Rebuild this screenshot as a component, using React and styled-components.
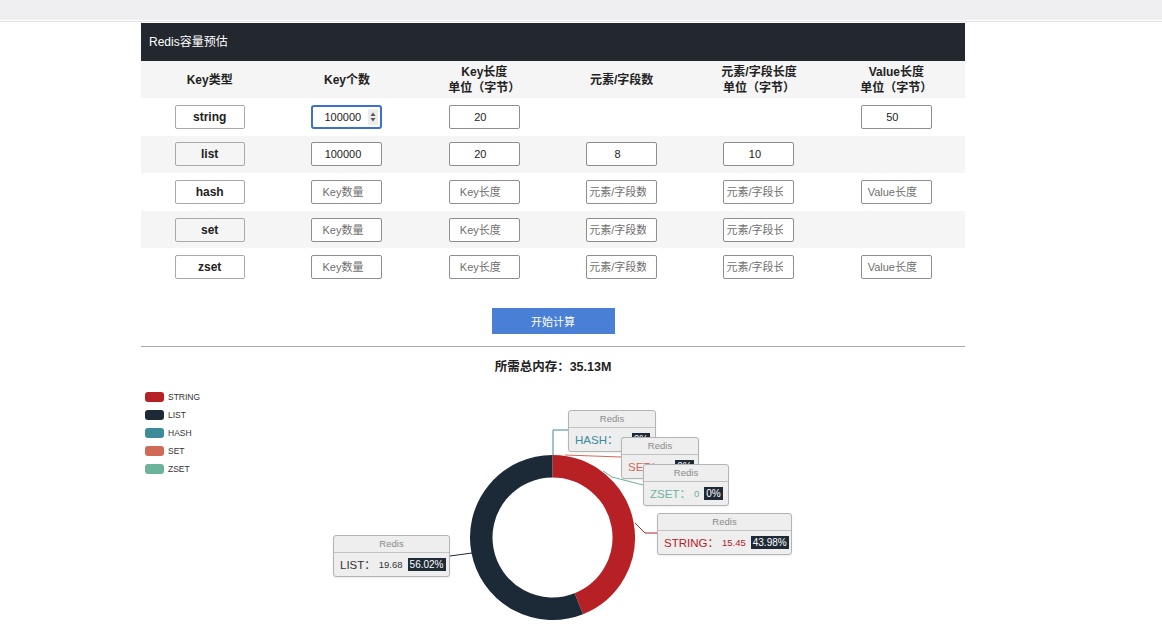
import React from 'react';
import styled, { createGlobalStyle } from 'styled-components';

const GlobalStyle = createGlobalStyle`
  html, body {
    margin: 0;
    padding: 0;
    background: #fff;
  }
  body {
    font-family: "Liberation Sans", "Noto Sans CJK SC", sans-serif;
    color: #222;
    overflow: hidden;
  }
`;

const TopBar = styled.div`
  height: 21px;
  background: linear-gradient(#efeff1 0 20px, #fff 20px);
  border-bottom: 1px solid #e2e2e2;
`;

const Main = styled.main`
  width: 824px;
  margin: 1px 0 0 141px;
`;

const CardHeader = styled.div`
  box-sizing: border-box;
  height: 38px;
  display: flex;
  align-items: center;
  padding: 0 0 3px 8px;
  background: #23282e;
  color: #fff;
  font-size: 12px;
`;

const Row = styled.div`
  display: grid;
  grid-template-columns: repeat(6, 1fr);
  align-items: center;
  height: ${p => p.$h || 37.6}px;
  background: ${p => (p.$striped ? '#f5f5f5' : '#fff')};
`;

const HeadCell = styled.div`
  text-align: center;
  font-size: 12px;
  font-weight: bold;
  line-height: 16px;
`;

const Cell = styled.div`
  display: flex;
  justify-content: center;
  align-items: center;
`;

const TypeBox = styled.div`
  box-sizing: border-box;
  width: 70px;
  height: 24px;
  display: flex;
  align-items: center;
  justify-content: center;
  border: 1px solid #a8a8a8;
  border-radius: 2px;
  font-size: 12px;
  font-weight: bold;
`;

const FieldWrap = styled.div`
  position: relative;
  width: 71px;
  height: 24px;
`;

const Field = styled.input`
  box-sizing: border-box;
  width: 100%;
  height: 100%;
  margin: 0;
  padding: 0 10px 0 2px;
  border: ${p => (p.$focused ? '2px solid #3d70cc' : '1px solid #8e8e8e')};
  border-radius: ${p => (p.$focused ? 3 : 2)}px;
  outline: none;
  background: #fff;
  color: #222;
  font-family: inherit;
  font-size: 11px;
  text-align: ${p => (p.$focused ? 'left' : 'center')};
  padding-left: ${p => (p.$focused ? 11 : 2)}px;

  &::placeholder {
    color: #6f6f6f;
  }
`;

const Spinner = styled.div`
  position: absolute;
  right: 4px;
  top: 4px;
  width: 10px;
  height: 16px;
  border-radius: 2px;
  background: #ececec;
  display: flex;
  align-items: center;
  justify-content: center;
`;

const ButtonRow = styled.div`
  display: flex;
  justify-content: center;
  margin-top: 22px;
`;

const CalcButton = styled.button`
  width: 123px;
  height: 26px;
  border: none;
  background: #4a7fd6;
  color: #fff;
  font-family: inherit;
  font-size: 11px;
`;

const Divider = styled.hr`
  margin: 12px 0 0;
  border: none;
  height: 1px;
  background: #a9a9a9;
`;

const Total = styled.div`
  box-sizing: border-box;
  height: 33px;
  padding-top: 12px;
  text-align: center;
  font-size: 12.5px;
  font-weight: bold;
  line-height: 16px;
`;

const ChartArea = styled.section`
  position: relative;
  height: 257px;
  overflow: hidden;
`;

const Legend = styled.ul`
  list-style: none;
  margin: 0;
  padding: 12px 0 0 4px;
  display: flex;
  flex-direction: column;
  gap: 8px;
`;

const LegendItem = styled.li`
  display: flex;
  align-items: center;
  gap: 4px;
  height: 10px;
  font-size: 8.5px;
  color: #333;
`;

const Swatch = styled.span`
  width: 19px;
  height: 10px;
  border-radius: 3px;
  background: ${p => p.$color};
`;

const Canvas = styled.div`
  position: absolute;
  inset: 0;
  pointer-events: none;
`;

const LabelBox = styled.div`
  position: absolute;
  left: ${p => p.$x}px;
  top: ${p => p.$y}px;
  width: ${p => p.$w}px;
  box-sizing: border-box;
  background: #eeeeee;
  border: 1px solid #b4b4b4;
  border-radius: 3px;
  box-shadow: 0 1px 2px rgba(0, 0, 0, 0.08);
  overflow: hidden;
`;

const BoxHead = styled.div`
  height: 16px;
  line-height: 16px;
  border-bottom: 1px solid #c2c2c2;
  text-align: center;
  font-size: 9.5px;
  color: #8a8a8a;
`;

const BoxBody = styled.div`
  height: 23px;
  display: flex;
  align-items: center;
  gap: 3px;
  padding: 0 6px;
  color: ${p => p.$color};
  white-space: nowrap;
`;

const Name = styled.span`
  font-size: 11.5px;
`;

const Num = styled.span`
  font-size: 9.5px;
  margin-right: 2px;
`;

const Badge = styled.span`
  background: #1f2a37;
  color: #fff;
  font-size: 10px;
  padding: 1px 2px;
`;

const COLORS = {
  STRING: '#b72024',
  LIST: '#1c2a38',
  HASH: '#3d8a98',
  SET: '#d06a54',
  ZSET: '#6db39c',
};

const rows = [
  { type: 'string', cells: [{ v: '100000', focused: true }, { v: '20' }, null, null, { v: '50' }] },
  { type: 'list', cells: [{ v: '100000' }, { v: '20' }, { v: '8' }, { v: '10' }, null] },
  { type: 'hash', cells: ['Key数量', 'Key长度', '元素/字段数', '元素/字段长度', 'Value长度'] },
  { type: 'set', cells: ['Key数量', 'Key长度', '元素/字段数', '元素/字段长度', null] },
  { type: 'zset', cells: ['Key数量', 'Key长度', '元素/字段数', '元素/字段长度', 'Value长度'] },
];

const labels = [
  { name: 'HASH', value: '0', pct: '0%', x: 427, y: 30, w: 88 },
  { name: 'SET', value: '0', pct: '0%', x: 480, y: 57, w: 78 },
  { name: 'ZSET', value: '0', pct: '0%', x: 502, y: 84, w: 86 },
  { name: 'STRING', value: '15.45', pct: '43.98%', x: 516, y: 133, w: 135 },
  { name: 'LIST', value: '19.68', pct: '56.02%', x: 192, y: 155, w: 117 },
];

const connectors = [
  { color: COLORS.HASH, pts: '412,75 412,50 427,50' },
  { color: COLORS.SET, pts: '424,75 480,77' },
  { color: COLORS.ZSET, pts: '462,91 471,97 502,105' },
  { color: COLORS.STRING, pts: '494,143 504,153 516,153' },
  { color: COLORS.LIST, pts: '309,176 331,173' },
];

const Donut = () => {
  const cx = 411.5;
  const cy = 157.5;
  const r = 71.25;
  const angle = (0.4398 * 360 * Math.PI) / 180;
  const ex = cx + r * Math.sin(angle);
  const ey = cy - r * Math.cos(angle);
  return (
    <svg width="824" height="257" style={{ position: 'absolute', left: 0, top: 0 }}>
      <path
        d={`M ${cx} ${cy - r} A ${r} ${r} 0 0 1 ${ex} ${ey}`}
        fill="none"
        stroke={COLORS.STRING}
        strokeWidth="22.5"
      />
      <path
        d={`M ${ex} ${ey} A ${r} ${r} 0 1 1 ${cx} ${cy - r}`}
        fill="none"
        stroke={COLORS.LIST}
        strokeWidth="22.5"
      />
      {connectors.map((c, i) => (
        <polyline key={i} points={c.pts} fill="none" stroke={c.color} strokeWidth="1" />
      ))}
    </svg>
  );
};

const InputCell = ({ cell }) => {
  if (!cell) return <Cell />;
  if (typeof cell === 'string') {
    return (
      <Cell>
        <FieldWrap>
          <Field placeholder={cell} />
        </FieldWrap>
      </Cell>
    );
  }
  return (
    <Cell>
      <FieldWrap>
        <Field defaultValue={cell.v} $focused={cell.focused} />
        {cell.focused && (
          <Spinner>
            <svg width="6" height="10" viewBox="0 0 6 10">
              <path d="M3 0.5 L5.5 4 L0.5 4 Z M3 9.5 L5.5 6 L0.5 6 Z" fill="#555" />
            </svg>
          </Spinner>
        )}
      </FieldWrap>
    </Cell>
  );
};

export default function App() {
  return (
    <>
      <GlobalStyle />
      <TopBar />
      <Main>
        <CardHeader>Redis容量预估</CardHeader>
        <Row $h={37} $striped>
          <HeadCell>Key类型</HeadCell>
          <HeadCell>Key个数</HeadCell>
          <HeadCell>Key长度<br />单位（字节）</HeadCell>
          <HeadCell>元素/字段数</HeadCell>
          <HeadCell>元素/字段长度<br />单位（字节）</HeadCell>
          <HeadCell>Value长度<br />单位（字节）</HeadCell>
        </Row>
        {rows.map((row, i) => (
          <Row key={row.type} $striped={i % 2 === 1}>
            <Cell>
              <TypeBox>{row.type}</TypeBox>
            </Cell>
            {row.cells.map((c, j) => (
              <InputCell key={j} cell={c} />
            ))}
          </Row>
        ))}
        <ButtonRow>
          <CalcButton>开始计算</CalcButton>
        </ButtonRow>
        <Divider />
        <Total>所需总内存：35.13M</Total>
        <ChartArea>
          <Legend>
            {Object.entries(COLORS).map(([name, color]) => (
              <LegendItem key={name}>
                <Swatch $color={color} />
                {name}
              </LegendItem>
            ))}
          </Legend>
          <Canvas>
            <Donut />
            {labels.map(l => (
              <LabelBox key={l.name} $x={l.x} $y={l.y} $w={l.w}>
                <BoxHead>Redis</BoxHead>
                <BoxBody $color={l.name === 'LIST' ? '#333' : COLORS[l.name]}>
                  <Name>{l.name}：</Name>
                  <Num>{l.value}</Num>
                  <Badge>{l.pct}</Badge>
                </BoxBody>
              </LabelBox>
            ))}
          </Canvas>
        </ChartArea>
      </Main>
    </>
  );
}
